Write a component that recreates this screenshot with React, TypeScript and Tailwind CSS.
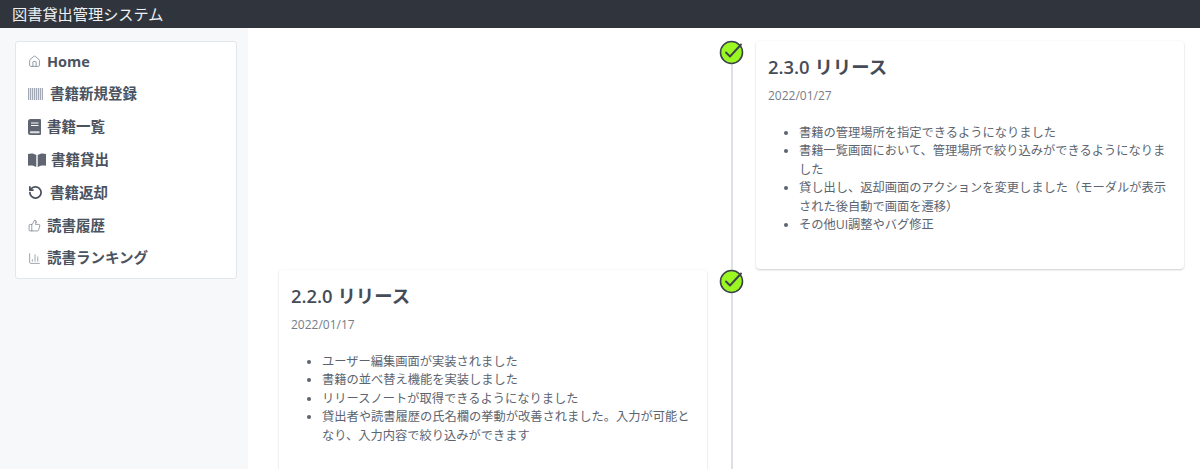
import React from 'react';
import { RotateCw, ThumbsUp, ChartColumn, House } from 'lucide-react';

const CheckMark = () => (
    <svg viewBox="0 0 26 26" className="w-[26px] h-[26px]">
        <circle cx="12.5" cy="13.5" r="11" fill="#9af722" stroke="#3d434b" strokeWidth="1.6" />
        <path d="M7 13.5 L11 17.5 L22 5.5" fill="none" stroke="#3d434b" strokeWidth="1.9" strokeLinecap="round" strokeLinejoin="round" />
    </svg>
);

const Barcode = () => (
    <svg viewBox="0 0 15 12" className="w-[15px] h-[12px]">
        <path d="M0.5 0v12M2.5 0v12M4.5 0v12M6.5 0v12M8.5 0v12M10.5 0v12M12.5 0v12M14.5 0v12" stroke="#a3aab5" strokeWidth="1.3" />
    </svg>
);

const BookIcon = () => (
    <svg viewBox="0 0 13 16" className="w-[13px] h-[16px]">
        <path d="M2.5 0H12a1 1 0 0 1 1 1v14a1 1 0 0 1-1 1H2.5A2.5 2.5 0 0 1 0 13.5v-11A2.5 2.5 0 0 1 2.5 0z" fill="#5f6672" />
        <path d="M3 4h7.5M3 6.5h7.5" stroke="#fff" strokeWidth="1" />
        <path d="M2.8 12.2h8.7v2H2.8a1 1 0 0 1 0-2z" fill="#dfe1e4" />
    </svg>
);

const BookOpenSolid = () => (
    <svg viewBox="0 0 18 14" className="w-[18px] h-[14px]">
        <path d="M0 1c3-1 6-.8 8.3 1v12C6 12.4 3 12 0 12.8z" fill="#5f6672" />
        <path d="M18 1c-3-1-6-.8-8.3 1v12c2.3-1.6 5.3-2 8.3-1.2z" fill="#5f6672" />
    </svg>
);

const items = [
    { icon: <House size={13} strokeWidth={1.4} className="text-[#77808c]" />, label: 'Home', gap: 'gap-[6px]' },
    { icon: <Barcode />, label: '書籍新規登録', gap: 'gap-[7px]' },
    { icon: <BookIcon />, label: '書籍一覧', gap: 'gap-[6px]' },
    { icon: <BookOpenSolid />, label: '書籍貸出', gap: 'gap-[5px]' },
    { icon: <RotateCw size={15} strokeWidth={2.8} className="text-[#4a5260] -scale-x-100" />, label: '書籍返却', gap: 'gap-[7px]' },
    { icon: <ThumbsUp size={13} strokeWidth={1.4} className="text-[#77808c]" />, label: '読書履歴', gap: 'gap-[6px]' },
    { icon: <ChartColumn size={13} strokeWidth={1.3} className="text-[#77808c]" />, label: '読書ランキング', gap: 'gap-[6px]' },
];

const ReleaseCard = ({ title, date, notes }: { title: string; date: string; notes: string[] }) => (
    <div className="bg-white rounded shadow-[0_1px_2px_rgba(0,0,0,0.18),0_0_3px_rgba(0,0,0,0.04)] pt-[13px] pl-[12px] pr-[12px] h-[228px]">
        <h2 className="text-[18.4px] leading-[26px] font-semibold text-[#454c58]">{title}</h2>
        <p className="text-[12px] leading-[16px] text-[#767d88] mt-[8px]">{date}</p>
        <ul className="list-disc mt-[20px] pl-[31px] text-[12.25px] leading-[18.375px] text-[#5c6470]">
            {notes.map((n) => (
                <li key={n}>{n}</li>
            ))}
        </ul>
    </div>
);

const App = () => {
    return (
        <div className="w-[1200px] h-[469px] overflow-hidden bg-white font-['Open_Sans','Noto_Sans_CJK_JP',sans-serif]">
            <header className="h-[28px] bg-[#30353d] flex items-center pl-[12px] text-[15.2px] text-[#eef0f2]">
                図書貸出管理システム
            </header>
            <div className="flex h-[441px]">
                <aside className="w-[248px] shrink-0 bg-[#f6f8fa] pt-[13px] pl-[15px]">
                    <nav className="w-[222px] h-[238px] bg-white rounded-[3px] border border-[#e3e6ea] pt-[3px] pl-[12px]">
                        {items.map((item) => (
                            <div
                                key={item.label}
                                className={`flex items-center h-[32.8px] text-[14.5px] font-bold text-[#4b5361] ${item.gap}`}
                            >
                                {item.icon}
                                <span>{item.label}</span>
                            </div>
                        ))}
                    </nav>
                </aside>
                <main className="flex-1 pl-[31px] pt-[13px]">
                    <div className="flex h-[229px]">
                        <div className="w-[429px]" />
                        <div className="w-[48px] relative flex justify-center">
                            <div className="w-[2px] bg-[#dde1e6] h-full" />
                            <div className="absolute top-[-2px] left-[11px]">
                                <CheckMark />
                            </div>
                        </div>
                        <div className="w-[428px]">
                            <ReleaseCard
                                title="2.3.0 リリース"
                                date="2022/01/27"
                                notes={[
                                    '書籍の管理場所を指定できるようになりました',
                                    '書籍一覧画面において、管理場所で絞り込みができるようになりました',
                                    '貸し出し、返却画面のアクションを変更しました（モーダルが表示された後自動で画面を遷移）',
                                    'その他UI調整やバグ修正',
                                ]}
                            />
                        </div>
                    </div>
                    <div className="flex h-[230px]">
                        <div className="w-[429px] pr-[1px]">
                            <ReleaseCard
                                title="2.2.0 リリース"
                                date="2022/01/17"
                                notes={[
                                    'ユーザー編集画面が実装されました',
                                    '書籍の並べ替え機能を実装しました',
                                    'リリースノートが取得できるようになりました',
                                    '貸出者や読書履歴の氏名欄の挙動が改善されました。入力が可能となり、入力内容で絞り込みができます',
                                ]}
                            />
                        </div>
                        <div className="w-[48px] relative flex justify-center">
                            <div className="w-[2px] bg-[#dde1e6] h-full" />
                            <div className="absolute top-[-2px] left-[11px]">
                                <CheckMark />
                            </div>
                        </div>
                        <div className="w-[428px]" />
                    </div>
                </main>
            </div>
        </div>
    );
};

export default App;
